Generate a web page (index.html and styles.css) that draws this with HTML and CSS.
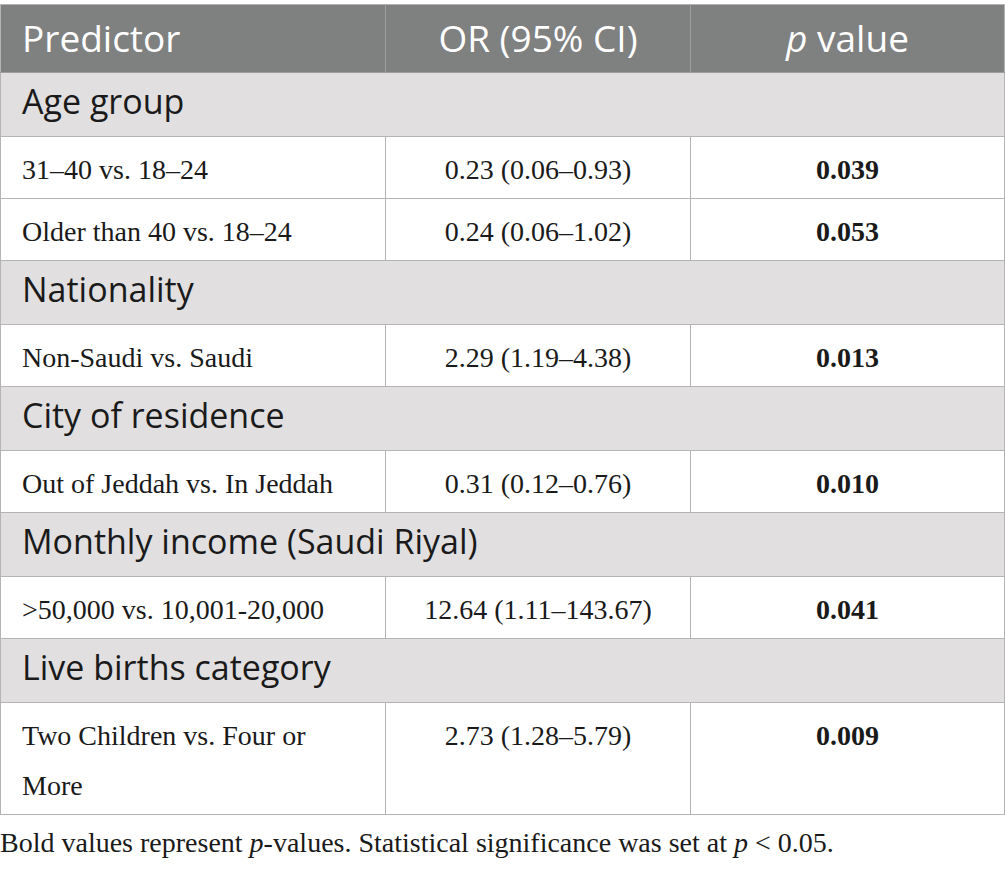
FILE: index.html
```html
<!DOCTYPE html>
<html>
<head>
<meta charset="utf-8">
<link rel="stylesheet" href="styles.css">
</head>
<body>
<table class="tbl">
  <colgroup>
    <col class="c1"><col class="c2"><col class="c3">
  </colgroup>
  <thead>
    <tr class="head">
      <th class="left">Predictor</th>
      <th>OR (95% CI)</th>
      <th><i>p</i> value</th>
    </tr>
  </thead>
  <tbody>
    <tr class="sec"><td colspan="3">Age group</td></tr>
    <tr class="row"><td class="left">31–40 vs. 18–24</td><td>0.23 (0.06–0.93)</td><td class="pv">0.039</td></tr>
    <tr class="row"><td class="left">Older than 40 vs. 18–24</td><td>0.24 (0.06–1.02)</td><td class="pv">0.053</td></tr>
    <tr class="sec"><td colspan="3">Nationality</td></tr>
    <tr class="row"><td class="left">Non-Saudi vs. Saudi</td><td>2.29 (1.19–4.38)</td><td class="pv">0.013</td></tr>
    <tr class="sec"><td colspan="3">City of residence</td></tr>
    <tr class="row"><td class="left">Out of Jeddah vs. In Jeddah</td><td>0.31 (0.12–0.76)</td><td class="pv">0.010</td></tr>
    <tr class="sec"><td colspan="3">Monthly income (Saudi Riyal)</td></tr>
    <tr class="row"><td class="left">&gt;50,000 vs. 10,001-20,000</td><td>12.64 (1.11–143.67)</td><td class="pv">0.041</td></tr>
    <tr class="sec"><td colspan="3">Live births category</td></tr>
    <tr class="row"><td class="left">Two Children vs. Four or More</td><td>2.73 (1.28–5.79)</td><td class="pv">0.009</td></tr>
  </tbody>
</table>
<p class="note">Bold values represent <i>p</i>-values. Statistical significance was set at <i>p</i> &lt; 0.05.</p>
</body>
</html>
```
FILE: styles.css
```css
html, body {
  margin: 0;
  padding: 0;
  background: #ffffff;
}
body {
  padding-top: 4px;
}
.tbl {
  border-collapse: collapse;
  width: 1004px;
  table-layout: fixed;
}
.c1 { width: 385px; }
.c2 { width: 305px; }
.c3 { width: 314px; }

.head th {
  background: #7f8080;
  color: #ffffff;
  font-family: "Open Sans", sans-serif;
  font-weight: 400;
  font-size: 37px;
  height: 65px;
  padding: 0 0 2px 0;
  line-height: 49px;
  text-align: center;
  vertical-align: middle;
  border: 1px solid #9c9d9d;
  border-top-color: #b4b4b4;
}
.head th:first-child { border-left-color: #b4b4b4; }
.head th:last-child { border-right-color: #b4b4b4; }
.head th.left {
  text-align: left;
  padding-left: 21px;
}
.sec td {
  background: #e1dfe0;
  color: #1a1a1a;
  font-family: "Open Sans", sans-serif;
  font-size: 34px;
  height: 56px;
  line-height: 46px;
  padding: 0 0 7px 21px;
  vertical-align: middle;
  border: 1px solid #b4b4b4;
}
.row td {
  font-family: "Liberation Serif", "Times New Roman", serif;
  font-size: 28px;
  line-height: 50px;
  color: #1a1a1a;
  padding: 8px 0 3px 0;
  text-align: center;
  vertical-align: top;
  border: 1px solid #b4b4b4;
}
.row td.left {
  text-align: left;
  padding-left: 21px;
  padding-right: 40px;
}
.row td.pv {
  font-weight: 700;
}
.note {
  margin: 12px 0 0 0;
  font-family: "Liberation Serif", "Times New Roman", serif;
  font-size: 28px;
  line-height: 32px;
  color: #1a1a1a;
}
```
